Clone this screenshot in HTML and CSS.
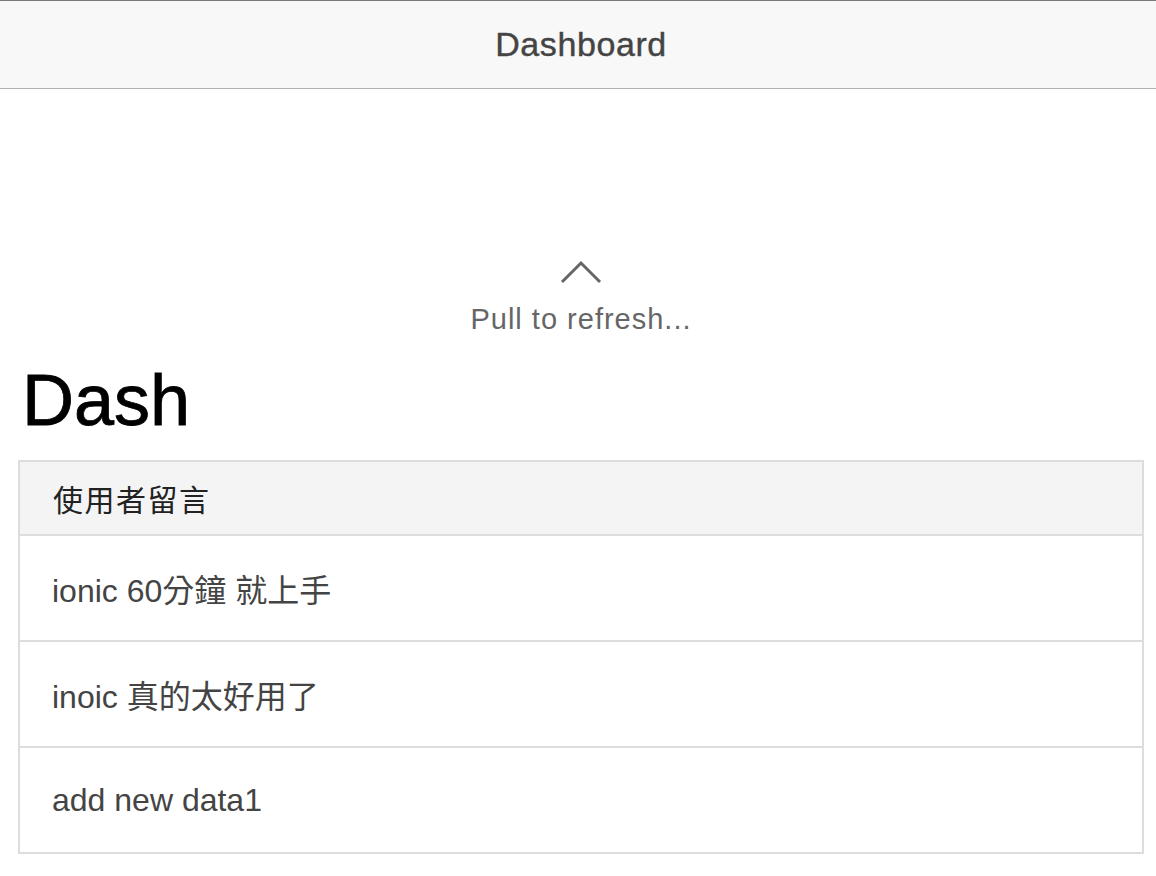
FILE: index.html
```html
<!DOCTYPE html>
<html lang="zh-Hant">
<head>
    <meta charset="UTF-8">
    <meta name="viewport" content="width=device-width, initial-scale=1.0">
    <title>Dashboard</title>
    <link rel="stylesheet" href="styles.css">
</head>
<body>
    <div class="page">
        <!-- Top navigation bar -->
        <header class="bar-header">
            <h1 class="title">Dashboard</h1>
        </header>

        <!-- Pull-to-refresh indicator -->
        <div class="refresher">
            <svg class="refresher-icon" width="42" height="24" viewBox="0 0 42 24" aria-hidden="true">
                <polyline points="2,22 21,3 40,22" fill="none" stroke="#666" stroke-width="3"/>
            </svg>
            <div class="refresher-text">Pull to refresh...</div>
        </div>

        <!-- Main content -->
        <div class="content">
            <h2 class="page-title">Dash</h2>

            <div class="list card">
                <div class="item item-divider">使用者留言</div>
                <div class="item">ionic 60分鐘 就上手</div>
                <div class="item">inoic 真的太好用了</div>
                <div class="item">add new data1</div>
            </div>
        </div>
    </div>
</body>
</html>
```

FILE: styles.css
```css
/* General styling */
html, body {
    margin: 0;
    overflow: hidden;
}

body {
    font-family: 'Liberation Sans', Arial, 'Noto Sans CJK TC', sans-serif;
    background-color: #fff;
    color: #000;
}

.page {
    width: 1162px;
}

/* Header bar */
.bar-header {
    height: 87px;
    border-top: 1px solid #7a7a7a;
    border-bottom: 1px solid #b2b2b2;
    background-color: #f8f8f8;
    display: flex;
    justify-content: center;
    align-items: center;
}

.title {
    margin: 0;
    font-size: 34px;
    letter-spacing: 0.6px;
    font-weight: normal;
    color: #444;
    -webkit-text-stroke: 0.4px #444; /* fake the medium weight */
    line-height: 40px;
    padding-bottom: 2px;
}

/* Refresher */
.refresher {
    height: 271px;
    display: flex;
    flex-direction: column;
    align-items: center;
    justify-content: flex-end;
}

.refresher-icon {
    display: block;
    margin-bottom: 19px;
}

.refresher-text {
    font-size: 29px;
    letter-spacing: 1px;
    line-height: 32px;
    color: #666;
    margin-bottom: 25px;
}

/* Content */
.content {
    padding: 0 18px;
}

.page-title {
    margin: 0 0 20px 4px;
    font-size: 72px;
    line-height: 80px;
    font-weight: normal;
    color: #000;
    -webkit-text-stroke: 0.8px #000;
}

.list {
    border: 2px solid #ddd;
    background-color: #fff;
}

.item {
    height: 104px;
    padding: 0 32px;
    display: flex;
    align-items: center;
    font-size: 32px;
    color: #444;
    border-top: 2px solid #ddd;
}

.item-divider {
    height: 72px;
    border-top: none;
    background-color: #f4f4f4;
    padding-left: 33px;
    font-size: 30px;
    letter-spacing: 1.5px;
    color: #222;
    font-family: 'Noto Sans CJK TC', sans-serif;
}
```
